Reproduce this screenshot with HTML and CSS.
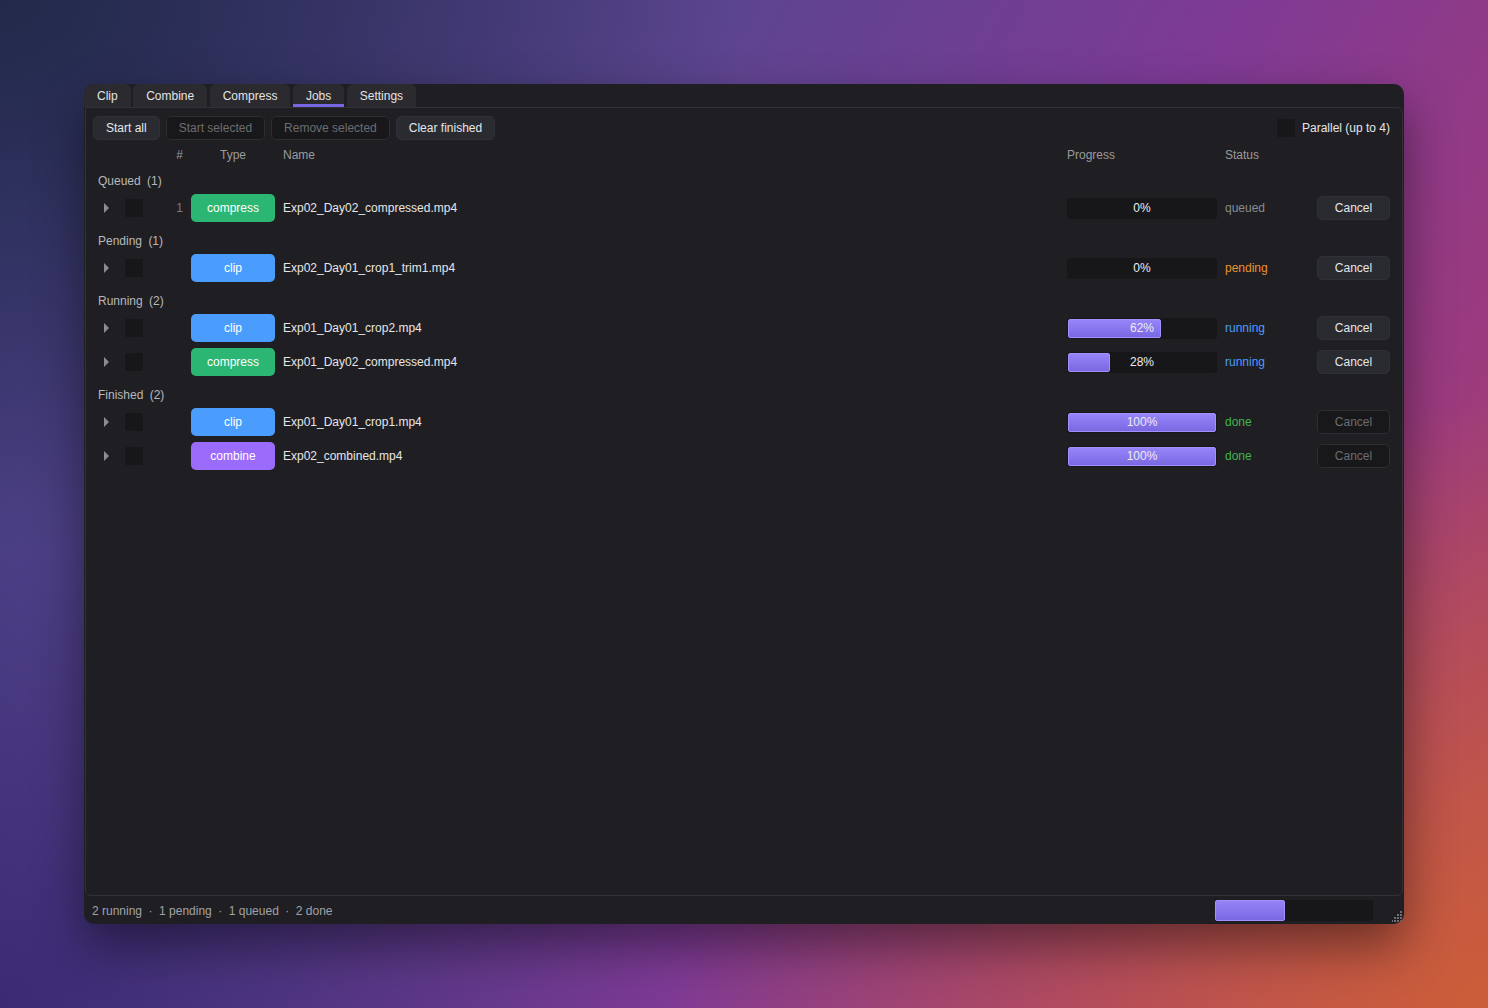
FILE: index.html
```html
<!DOCTYPE html>
<html lang="en">
<head>
  <meta charset="UTF-8" />
  <title>Jobs</title>
  <link rel="stylesheet" href="styles.css">
</head>
<body>

<div class="window">
  <div class="tabs">
    <div class="tab">Clip</div>
    <div class="tab">Combine</div>
    <div class="tab">Compress</div>
    <div class="tab active">Jobs</div>
    <div class="tab">Settings</div>
  </div>

  <div class="panel">
    <div class="toolbar">
      <button class="btn">Start all</button>
      <button class="btn disabled">Start selected</button>
      <button class="btn disabled">Remove selected</button>
      <button class="btn">Clear finished</button>
      <label class="parallel"><span class="check"></span>Parallel (up to 4)</label>
    </div>

    <div class="grid head">
      <span></span>
      <span></span>
      <span class="num">#</span>
      <span class="type-head">Type</span>
      <span>Name</span>
      <span>Progress</span>
      <span>Status</span>
      <span></span>
    </div>

    <div class="group">Queued <span>(1)</span></div>
    <div class="grid row">
      <span class="arrow"></span>
      <span class="check"></span>
      <span class="num">1</span>
      <span class="badge compress">compress</span>
      <span class="name">Exp02_Day02_compressed.mp4</span>
      <div class="progress"><div class="fill" style="width: 0%"></div><span>0%</span></div>
      <span class="status queued">queued</span>
      <button class="btn cancel">Cancel</button>
    </div>

    <div class="group">Pending <span>(1)</span></div>
    <div class="grid row">
      <span class="arrow"></span>
      <span class="check"></span>
      <span class="num"></span>
      <span class="badge clip">clip</span>
      <span class="name">Exp02_Day01_crop1_trim1.mp4</span>
      <div class="progress"><div class="fill" style="width: 0%"></div><span>0%</span></div>
      <span class="status pending">pending</span>
      <button class="btn cancel">Cancel</button>
    </div>

    <div class="group">Running <span>(2)</span></div>
    <div class="grid row">
      <span class="arrow"></span>
      <span class="check"></span>
      <span class="num"></span>
      <span class="badge clip">clip</span>
      <span class="name">Exp01_Day01_crop2.mp4</span>
      <div class="progress"><div class="fill" style="width: 62%"></div><span>62%</span></div>
      <span class="status running">running</span>
      <button class="btn cancel">Cancel</button>
    </div>
    <div class="grid row">
      <span class="arrow"></span>
      <span class="check"></span>
      <span class="num"></span>
      <span class="badge compress">compress</span>
      <span class="name">Exp01_Day02_compressed.mp4</span>
      <div class="progress"><div class="fill" style="width: 28%"></div><span>28%</span></div>
      <span class="status running">running</span>
      <button class="btn cancel">Cancel</button>
    </div>

    <div class="group">Finished <span>(2)</span></div>
    <div class="grid row">
      <span class="arrow"></span>
      <span class="check"></span>
      <span class="num"></span>
      <span class="badge clip">clip</span>
      <span class="name">Exp01_Day01_crop1.mp4</span>
      <div class="progress"><div class="fill" style="width: 100%"></div><span>100%</span></div>
      <span class="status done">done</span>
      <button class="btn cancel disabled">Cancel</button>
    </div>
    <div class="grid row">
      <span class="arrow"></span>
      <span class="check"></span>
      <span class="num"></span>
      <span class="badge combine">combine</span>
      <span class="name">Exp02_combined.mp4</span>
      <div class="progress"><div class="fill" style="width: 100%"></div><span>100%</span></div>
      <span class="status done">done</span>
      <button class="btn cancel disabled">Cancel</button>
    </div>
  </div>

  <div class="footer">
    <span>2 running</span><span class="dot">·</span>
    <span>1 pending</span><span class="dot">·</span>
    <span>1 queued</span><span class="dot">·</span>
    <span>2 done</span>
    <div class="total"><div class="fill" style="width: 44%"></div></div>
    <svg class="grip" width="11" height="11" viewBox="0 0 11 11">
      <rect x="8" y="0" width="2" height="2" fill="#6f6f75"/>
      <rect x="5" y="3" width="2" height="2" fill="#6f6f75"/>
      <rect x="8" y="3" width="2" height="2" fill="#6f6f75"/>
      <rect x="2" y="6" width="2" height="2" fill="#6f6f75"/>
      <rect x="5" y="6" width="2" height="2" fill="#6f6f75"/>
      <rect x="8" y="6" width="2" height="2" fill="#6f6f75"/>
      <rect x="-1" y="9" width="2" height="2" fill="#6f6f75"/>
      <rect x="2" y="9" width="2" height="2" fill="#6f6f75"/>
      <rect x="5" y="9" width="2" height="2" fill="#6f6f75"/>
      <rect x="8" y="9" width="2" height="2" fill="#6f6f75"/>
    </svg>
  </div>
</div>

</body>
</html>
```

FILE: styles.css
```css
body {
  margin: 0;
  height: 100vh;
  display: flex;
  justify-content: center;
  align-items: center;
  font-family: 'Liberation Sans', Arial, sans-serif;
  font-size: 12px;
  color: #e2e2e4;
  background:
    radial-gradient(ellipse 55% 60% at 100% 100%, rgba(205, 95, 55, 0.95), rgba(205, 95, 55, 0) 100%),
    radial-gradient(ellipse 50% 55% at 0% 0%, rgba(32, 40, 70, 0.95), rgba(32, 40, 70, 0) 100%),
    radial-gradient(ellipse 45% 50% at 0% 100%, rgba(52, 36, 110, 0.8), rgba(52, 36, 110, 0) 100%),
    linear-gradient(120deg, #403c7e 0%, #5c4590 35%, #7e3a95 60%, #9a3a80 80%, #b44a5c 100%);
  overflow: hidden;
}

.window {
  width: 1320px;
  height: 840px;
  display: flex;
  flex-direction: column;
  background: #1f1f23;
  border-radius: 10px;
  box-shadow: 0 22px 50px rgba(0, 0, 0, 0.45);
  overflow: hidden;
}

/* tabs */
.tabs {
  display: flex;
  gap: 2.5px;
  height: 23px;
}

.tab {
  padding: 1px 13px 0;
  line-height: 22px;
  background: #2a2a2f;
  border-radius: 6px 6px 0 0;
  color: #e4e4e6;
}

.tab.active {
  box-shadow: inset 0 -3px 0 #7766e2;
}

/* main panel */
.panel {
  flex: 1;
  margin: 0 1px;
  padding: 8px 12px 0 7px;
  border: 1px solid #313136;
  border-radius: 0 6px 6px 6px;
}

.toolbar {
  display: flex;
  align-items: center;
  gap: 6px;
  height: 24px;
  margin-bottom: 5px;
}

.btn {
  height: 24px;
  padding: 0 12px;
  font-family: inherit;
  font-size: 12px;
  color: #e6e6e8;
  background: #2a2b30;
  border: 1px solid #303136;
  border-radius: 5px;
}

.btn.disabled {
  color: #6c6c70;
  background: #18181b;
  border-color: #2d2d32;
}

.parallel {
  margin-left: auto;
  display: flex;
  align-items: center;
  gap: 7px;
  color: #e6e6e8;
}

.check {
  width: 18px;
  height: 18px;
  background: #17171a;
  border-radius: 2px;
}

/* job grid */
.grid {
  display: grid;
  grid-template-columns: 24px 18px 32px 84px 1fr 150px 84px 73px;
  column-gap: 8px;
  align-items: center;
}

.head {
  height: 20px;
  color: #9a9a9c;
}

.head .type-head {
  padding-left: 29px;
}

.num {
  text-align: right;
  color: #7a7a7e;
}

.head .num {
  color: #9a9a9c;
}

.group {
  height: 20px;
  line-height: 20px;
  margin-top: 6px;
  padding-left: 5px;
  color: #b8b8bb;
}

.group span {
  margin-left: 3px;
}

.row {
  height: 34px;
  box-sizing: border-box;
  padding: 3px 0;
}

.arrow {
  justify-self: center;
  margin-left: 2px;
  width: 0;
  height: 0;
  border-left: 5px solid #8c8c90;
  border-top: 5px solid transparent;
  border-bottom: 5px solid transparent;
}

.badge {
  height: 28px;
  line-height: 28px;
  text-align: center;
  color: #fff;
  border-radius: 5px;
}

.badge.compress { background: #2bb674; }
.badge.clip { background: #4a9dfd; }
.badge.combine { background: #9b6cfb; }

.name {
  color: #e6e6e8;
}

.progress {
  position: relative;
  height: 21px;
  display: flex;
  align-items: center;
  justify-content: center;
  background: #17171a;
  border-radius: 3px;
  color: #ececee;
}

.progress span {
  position: relative;
}

.progress .fill {
  position: absolute;
  top: 1px;
  bottom: 1px;
  left: 1px;
  max-width: calc(100% - 2px);
}

.fill {
  box-sizing: border-box;
  background: linear-gradient(#9585f8, #7a68e2);
  border: 1px solid #a091ff;
  border-radius: 2px;
}

.progress .fill[style="width: 0%"] {
  display: none;
}

.status.queued { color: #8a8a8e; }
.status.pending { color: #e8922e; }
.status.running { color: #4a9dfd; }
.status.done { color: #3fb54c; }

.cancel {
  width: 73px;
  padding: 0;
}

/* footer */
.footer {
  height: 28px;
  display: flex;
  align-items: center;
  padding: 1px 0 0 8px;
  box-sizing: border-box;
  color: #a2a2a6;
}

.dot {
  margin: 0 6.5px;
}

.total {
  margin-left: auto;
  width: 158px;
  height: 21px;
  background: #17171a;
  border-radius: 3px;
  display: flex;
}

.total .fill {
  height: 100%;
}

.grip {
  align-self: flex-end;
  margin: 0 1px 2px 19px;
}
```
